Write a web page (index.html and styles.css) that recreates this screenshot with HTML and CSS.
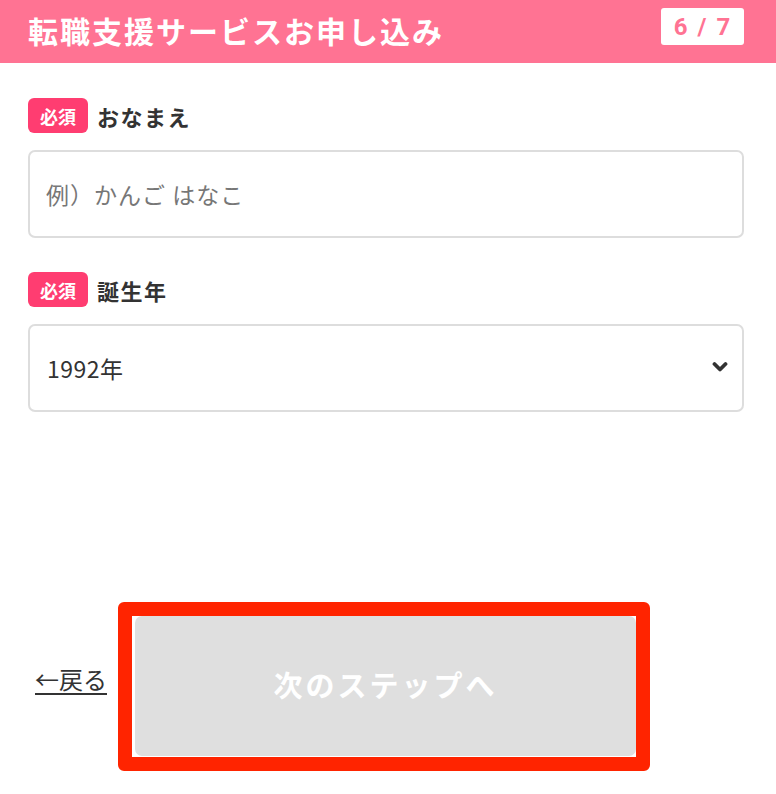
FILE: index.html
```html
<!DOCTYPE html>
<html lang="ja">
  <head>
    <meta charset="UTF-8" />
    <meta name="viewport" content="width=device-width, initial-scale=1.0" />
    <title>転職支援サービスお申し込み</title>
    <link rel="stylesheet" href="styles.css">
  </head>
  <body>
    <header class="form-header">
      <h1 class="form-title">転職支援サービスお申し込み</h1>
      <span class="step-count">6 / 7</span>
    </header>

    <form class="entry-form">
      <div class="field">
        <label class="field-label" for="name">
          <span class="required">必須</span>おなまえ
        </label>
        <input id="name" class="text-input" type="text" placeholder="例）かんご はなこ" />
      </div>

      <div class="field">
        <label class="field-label" for="birth-year">
          <span class="required">必須</span>誕生年
        </label>
        <div class="select-wrap">
          <select id="birth-year" class="text-input select-input">
            <option>1990年</option>
            <option>1991年</option>
            <option selected>1992年</option>
            <option>1993年</option>
          </select>
          <svg class="select-arrow" width="16" height="12" viewBox="0 0 16 12">
            <path d="M2.5 3 L8 8.5 L13.5 3" fill="none" stroke="#333" stroke-width="3.8" stroke-linecap="round" stroke-linejoin="round"/>
          </svg>
        </div>
      </div>

      <div class="form-actions">
        <a href="#" class="back-link">←戻る</a>
        <div class="next-frame">
          <button type="button" class="next-button" disabled>次のステップへ</button>
        </div>
      </div>
    </form>
  </body>
</html>
```

FILE: styles.css
```css
body {
  margin: 0;
  font-family: "Noto Sans CJK JP", "Noto Sans", sans-serif;
  color: #333;
  background: #fff;
}
.form-header {
  height: 63px;
  padding: 0 32px 0 28px;
  display: flex;
  align-items: center;
  justify-content: space-between;
  background-color: #ff7393;
}
.form-title {
  margin: 0;
  font-size: 30px;
  font-weight: bold;
  color: #fff;
  line-height: 1;
  letter-spacing: 2px;
  padding-bottom: 4px;
}
.step-count {
  width: 83px;
  height: 37px;
  display: flex;
  align-items: center;
  justify-content: center;
  background: #fff;
  border-radius: 3px;
  color: #ff7393;
  font-family: "Roboto", sans-serif;
  font-size: 24px;
  font-weight: bold;
  letter-spacing: 1px;
  word-spacing: 2px;
  margin-top: -10px;
}

.entry-form {
  padding: 35px 32px 0 28px;
}
.field {
  margin-bottom: 34px;
}
.field-label {
  display: flex;
  align-items: center;
  gap: 9px;
  font-size: 22px;
  font-weight: bold;
  letter-spacing: 1.5px;
  margin-bottom: 17px;
}
.required {
  width: 60px;
  height: 35px;
  display: flex;
  align-items: center;
  justify-content: center;
  background-color: #ff3d71;
  border-radius: 6px;
  color: #fff;
  font-size: 18px;
  letter-spacing: 0;
}
.text-input {
  display: block;
  width: 100%;
  height: 88px;
  box-sizing: border-box;
  padding: 0 16px;
  border: 2px solid #ddd;
  border-radius: 7px;
  background: #fff;
  font-family: inherit;
  font-size: 23px;
  letter-spacing: 0.5px;
  color: #333;
  outline: none;
}
.text-input::placeholder {
  color: #777;
  letter-spacing: 1px;
}
.select-wrap {
  position: relative;
}
.select-input {
  appearance: none;
  -webkit-appearance: none;
  padding-left: 17px;
}
.select-arrow {
  position: absolute;
  right: 16px;
  top: 37px;
}

.form-actions {
  margin-top: 190px;
  padding-left: 7px;
  display: flex;
  align-items: center;
  gap: 11px;
}
.back-link {
  color: #333;
  font-size: 24px;
  text-decoration: underline;
  text-underline-offset: 4px;
  text-decoration-thickness: 2px;
  margin-top: -16px;
}
.next-frame {
  width: 532px;
  height: 169px;
  box-sizing: border-box;
  border: 14px solid #ff2400;
  border-radius: 6px;
  padding: 0 0 1px 3px;
  background: #fff;
}
.next-button {
  display: block;
  width: 100%;
  height: 100%;
  border: none;
  border-radius: 7px;
  background-color: #dfdfdf;
  color: #fff;
  font-family: inherit;
  font-size: 29px;
  font-weight: bold;
  letter-spacing: 3px;
  padding-bottom: 6px;
}
```
